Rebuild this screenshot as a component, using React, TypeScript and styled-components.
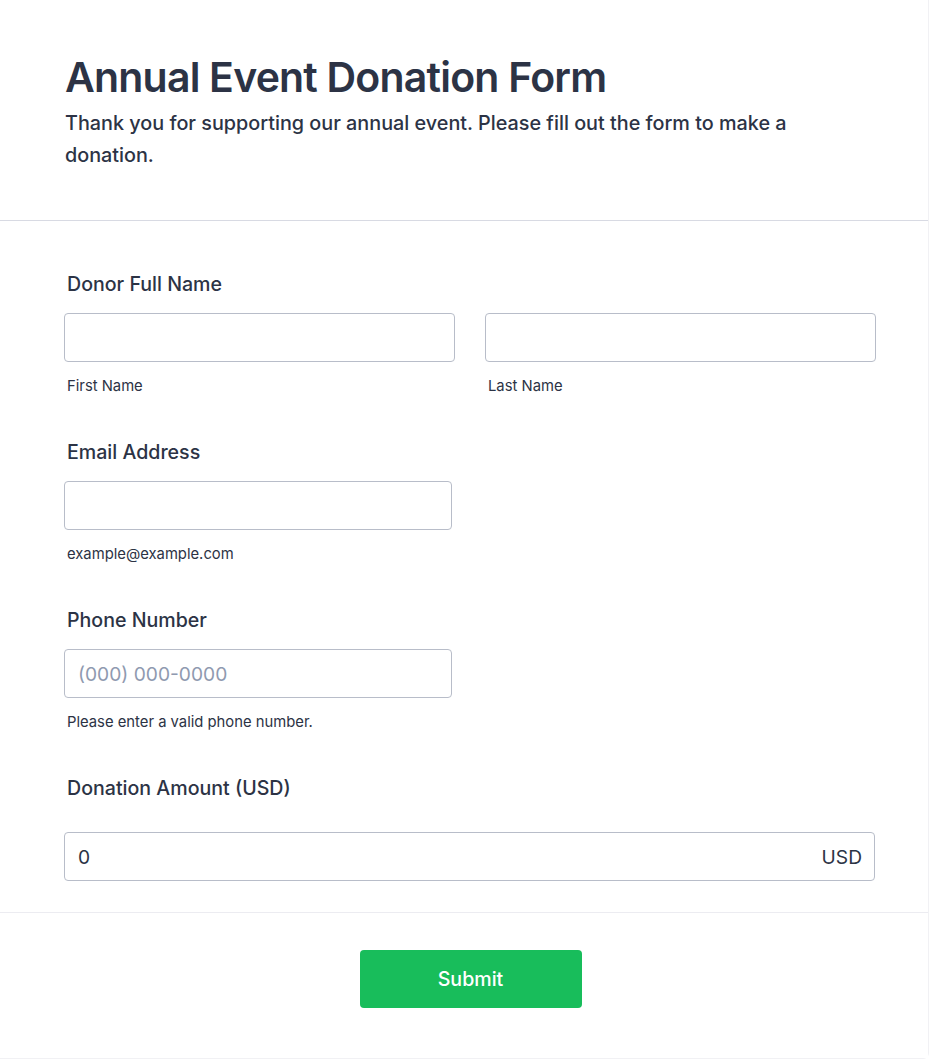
import React from "react";
import styled, { createGlobalStyle } from "styled-components";

const Global = createGlobalStyle`
  html, body { margin: 0; padding: 0; background: #ffffff; }
  body { font-family: Inter, "Noto Sans", sans-serif; color: #2c3345; }
  * { box-sizing: border-box; }
`;

const Card = styled.div`
  width: 929px;
  min-height: 1058px;
  background: #ffffff;
  border-right: 1px solid #f1f1f4;
  border-bottom: 1px solid #f1f1f4;
  border-radius: 0 0 6px 0;
  display: flex;
  flex-direction: column;
`;

const Header = styled.header`
  padding: 53px 64px 49px 65px;
  border-bottom: 1px solid #d8dae3;
`;

const Title = styled.h1`
  margin: 0;
  font-size: 41px;
  line-height: 48px;
  font-weight: 600;
  letter-spacing: -0.8px;
  color: #2c3345;
`;

const Subtitle = styled.p`
  margin: 6px 0 0;
  max-width: 760px;
  font-size: 19.8px;
  line-height: 32px;
  font-weight: 500;
  color: #2c3345;
`;

const FormBody = styled.div`
  padding: 50px 54px 31px 64px;
  display: flex;
  flex-direction: column;
  gap: 43px;
  border-bottom: 1px solid #ececf1;
`;

const Field = styled.div`
  display: flex;
  flex-direction: column;
`;

const Label = styled.label<{ $gap?: number }>`
  padding-left: 3px;
  font-size: 19.6px;
  line-height: 27px;
  font-weight: 500;
  color: #2c3345;
  margin-bottom: ${(p) => p.$gap ?? 15}px;
`;

const Row = styled.div`
  display: grid;
  grid-template-columns: 391px 391px;
  column-gap: 30px;
`;

const Col = styled.div`
  display: flex;
  flex-direction: column;
`;

const Input = styled.input<{ $w?: number }>`
  width: ${(p) => (p.$w ? `${p.$w}px` : "100%")};
  height: 49px;
  border: 1px solid #b8bdc9;
  border-radius: 4px;
  padding: 0 13px;
  font-family: Inter, "Noto Sans", sans-serif;
  font-size: 19.2px;
  color: #2c3345;
  background: #ffffff;
  outline: none;
  &::placeholder { color: #8f9ab0; }
`;

const Sub = styled.span`
  margin-top: 14px;
  padding-left: 3px;
  font-size: 14.8px;
  line-height: 20px;
  color: #2c3345;
`;

const AmountBox = styled.div`
  width: 811px;
  height: 49px;
  border: 1px solid #b8bdc9;
  border-radius: 4px;
  display: flex;
  align-items: center;
  padding: 0 12px 0 13px;
`;

const AmountInput = styled.input`
  flex: 1;
  border: none;
  outline: none;
  padding: 0;
  font-family: Inter, "Noto Sans", sans-serif;
  font-size: 19.2px;
  color: #2c3345;
  background: transparent;
`;

const Currency = styled.span`
  font-size: 19.2px;
  color: #2c3345;
`;

const Footer = styled.div`
  flex: 1;
  background: #ffffff;
  display: flex;
  justify-content: center;
  padding: 37px 0 50px 13px;
`;

const SubmitButton = styled.button`
  width: 222px;
  height: 58px;
  background: #18bd5b;
  border: none;
  border-radius: 4px;
  color: #ffffff;
  font-family: Inter, "Noto Sans", sans-serif;
  font-size: 19.6px;
  font-weight: 500;
  cursor: pointer;
`;

export default function App() {
  return (
    <>
      <Global />
      <Card>
        <Header>
          <Title>Annual Event Donation Form</Title>
          <Subtitle>
            Thank you for supporting our annual event. Please fill out the form to make a donation.
          </Subtitle>
        </Header>
        <FormBody>
          <Field>
            <Label>Donor Full Name</Label>
            <Row>
              <Col>
                <Input type="text" />
                <Sub>First Name</Sub>
              </Col>
              <Col>
                <Input type="text" />
                <Sub>Last Name</Sub>
              </Col>
            </Row>
          </Field>
          <Field>
            <Label>Email Address</Label>
            <Input type="email" $w={388} />
            <Sub>example@example.com</Sub>
          </Field>
          <Field>
            <Label>Phone Number</Label>
            <Input type="tel" $w={388} placeholder="(000) 000-0000" />
            <Sub>Please enter a valid phone number.</Sub>
          </Field>
          <Field>
            <Label $gap={30}>Donation Amount (USD)</Label>
            <AmountBox>
              <AmountInput type="text" defaultValue="0" />
              <Currency>USD</Currency>
            </AmountBox>
          </Field>
        </FormBody>
        <Footer>
          <SubmitButton type="button">Submit</SubmitButton>
        </Footer>
      </Card>
    </>
  );
}
